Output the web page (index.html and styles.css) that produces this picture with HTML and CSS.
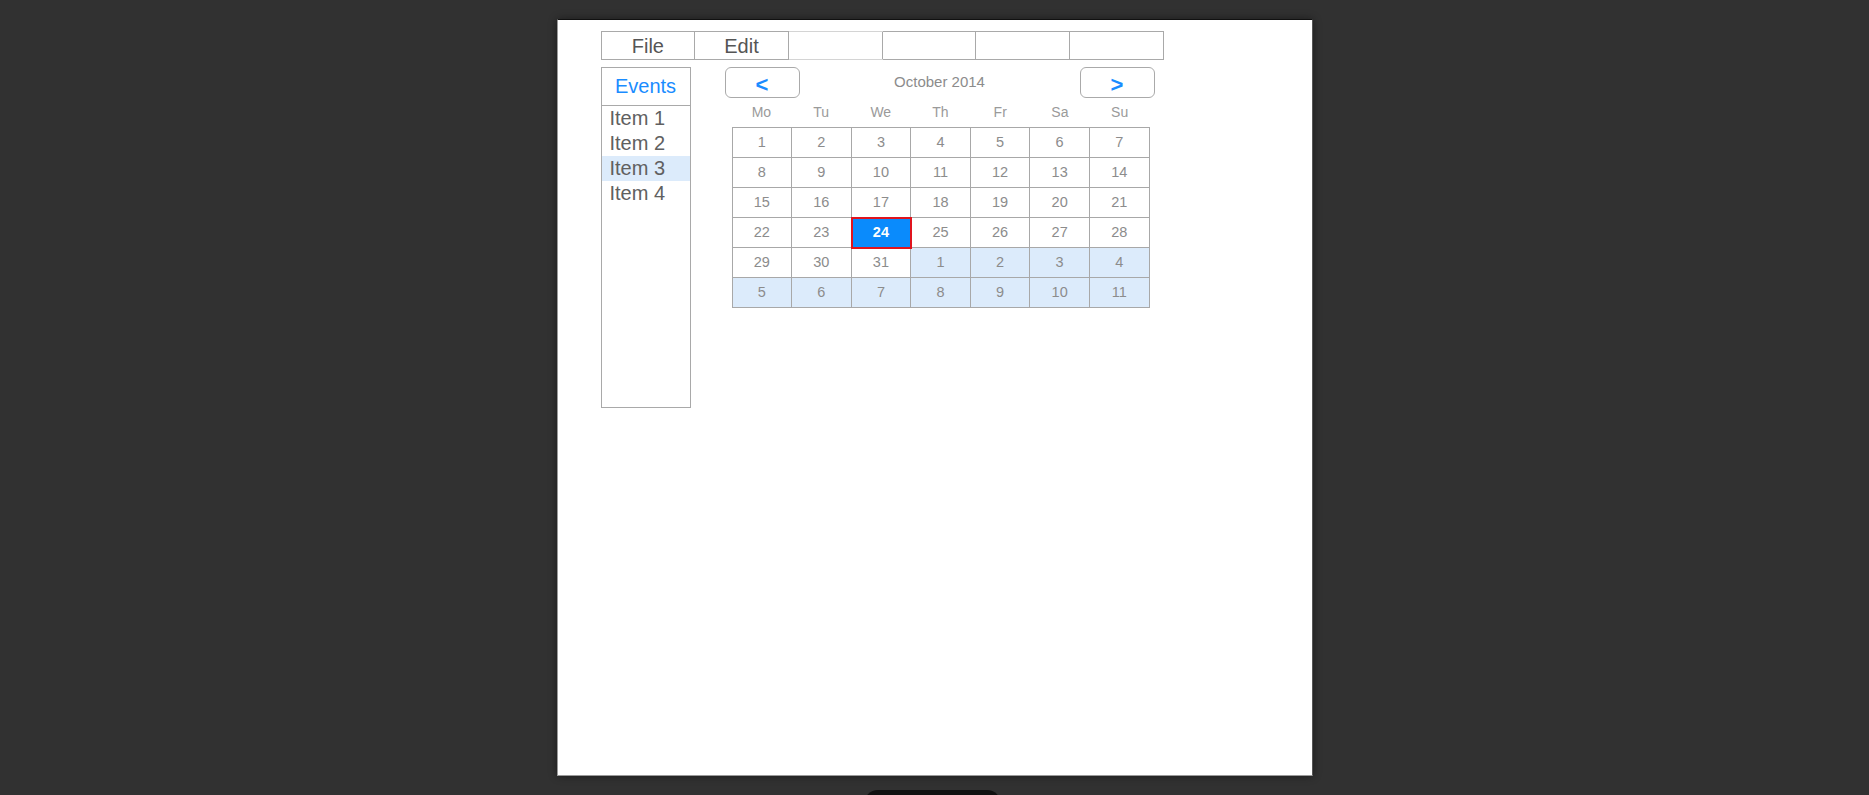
FILE: index.html
```html
<!DOCTYPE html>
<html>
<head>
<meta charset="utf-8">
<link rel="stylesheet" href="styles.css">
</head>
<body>
<div class="page">
  <div class="menubar">
    <div class="menu-cell">File</div>
    <div class="menu-cell">Edit</div>
    <div class="menu-cell faded"></div>
    <div class="menu-cell"></div>
    <div class="menu-cell"></div>
    <div class="menu-cell"></div>
  </div>
  <div class="main">
    <div class="events">
      <div class="events-head">Events</div>
      <div class="item">Item 1</div>
      <div class="item">Item 2</div>
      <div class="item selected">Item 3</div>
      <div class="item">Item 4</div>
    </div>
    <div class="calendar">
      <div class="cal-head">
        <div class="nav-btn">&lt;</div>
        <div class="cal-title">October 2014</div>
        <div class="nav-btn">&gt;</div>
      </div>
      <div class="weekdays">
        <div>Mo</div><div>Tu</div><div>We</div><div>Th</div><div>Fr</div><div>Sa</div><div>Su</div>
      </div>
      <div class="grid">
        <div class="day">1</div><div class="day">2</div><div class="day">3</div><div class="day">4</div><div class="day">5</div><div class="day">6</div><div class="day">7</div>
        <div class="day">8</div><div class="day">9</div><div class="day">10</div><div class="day">11</div><div class="day">12</div><div class="day">13</div><div class="day">14</div>
        <div class="day">15</div><div class="day">16</div><div class="day">17</div><div class="day">18</div><div class="day">19</div><div class="day">20</div><div class="day">21</div>
        <div class="day">22</div><div class="day">23</div><div class="day today">24</div><div class="day">25</div><div class="day">26</div><div class="day">27</div><div class="day">28</div>
        <div class="day">29</div><div class="day">30</div><div class="day">31</div><div class="day other">1</div><div class="day other">2</div><div class="day other">3</div><div class="day other">4</div>
        <div class="day other">5</div><div class="day other">6</div><div class="day other">7</div><div class="day other">8</div><div class="day other">9</div><div class="day other">10</div><div class="day other">11</div>
      </div>
    </div>
  </div>
</div>
<div class="dock"></div>
</body>
</html>
```
FILE: styles.css
```css
html, body {
  margin: 0;
  padding: 0;
}
body {
  background: #313131;
  height: 795px;
  overflow: hidden;
  position: relative;
  font-family: "Liberation Sans", Arial, sans-serif;
  padding-top: 19px;
  box-sizing: border-box;
}
.page {
  width: 756px;
  height: 757px;
  margin: 0 auto;
  background: #fff;
  box-sizing: border-box;
  border: 1px solid #9a9a9a;
  border-top-color: #111;
  border-right-color: #555;
  box-shadow: 0 0 8px rgba(0,0,0,0.45);
  padding: 11px 0 0 43px;
}
.menubar {
  display: flex;
  width: 563px;
  height: 29px;
  box-sizing: border-box;
  border: 1px solid #a9a9a9;
}
.menu-cell {
  flex: 1;
  border-right: 1px solid #a9a9a9;
  color: #555;
  font-size: 20px;
  line-height: 29px;
  text-align: center;
}
.menu-cell:last-child {
  border-right: none;
}
.menu-cell.faded {
  box-shadow: 0 -1px 0 #d4d4d4, 0 1px 0 #d4d4d4;
}
.main {
  display: flex;
  margin-top: 7px;
}
.events {
  width: 90px;
  height: 341px;
  box-sizing: border-box;
  border: 1px solid #a9a9a9;
}
.events-head {
  height: 37px;
  border-bottom: 1px solid #a9a9a9;
  color: #1a8cff;
  font-size: 20px;
  line-height: 37px;
  text-align: center;
}
.item {
  height: 25px;
  line-height: 25px;
  font-size: 20px;
  color: #606060;
  padding-left: 8px;
}
.item.selected {
  background: #dcebfb;
}
.calendar {
  margin-left: 34px;
  width: 430px;
}
.cal-head {
  display: flex;
  justify-content: space-between;
  align-items: flex-start;
  height: 31px;
}
.nav-btn {
  width: 75px;
  height: 31px;
  box-sizing: border-box;
  border: 1px solid #aaa;
  border-radius: 6px;
  color: #1a8cff;
  font-weight: bold;
  font-size: 22px;
  line-height: 34px;
  text-align: center;
}
.cal-title {
  color: #8c8c8c;
  font-size: 15px;
  line-height: 30px;
}
.weekdays {
  display: grid;
  grid-template-columns: repeat(7, 1fr);
  width: 418px;
  margin-left: 7px;
  height: 29px;
  color: #9a9a9a;
  font-size: 14px;
  line-height: 29px;
  text-align: center;
}
.grid {
  display: grid;
  grid-template-columns: repeat(7, 1fr);
  grid-auto-rows: 30px;
  width: 418px;
  margin-left: 7px;
  box-sizing: border-box;
  border-left: 1px solid #a8a8a8;
  border-top: 1px solid #a8a8a8;
}
.day {
  border-right: 1px solid #a8a8a8;
  border-bottom: 1px solid #a8a8a8;
  color: #8c8c8c;
  font-size: 14.5px;
  line-height: 29px;
  text-align: center;
}
.day.other {
  background: #dcebfb;
}
.day.today {
  background: #0a8bfc;
  color: #fff;
  font-weight: bold;
  outline: 2px solid #e0141e;
  outline-offset: -1px;
  position: relative;
  z-index: 1;
}
.dock {
  position: absolute;
  left: 864px;
  top: 790px;
  width: 137px;
  height: 30px;
  border-radius: 14px;
  background: #111;
}
```
